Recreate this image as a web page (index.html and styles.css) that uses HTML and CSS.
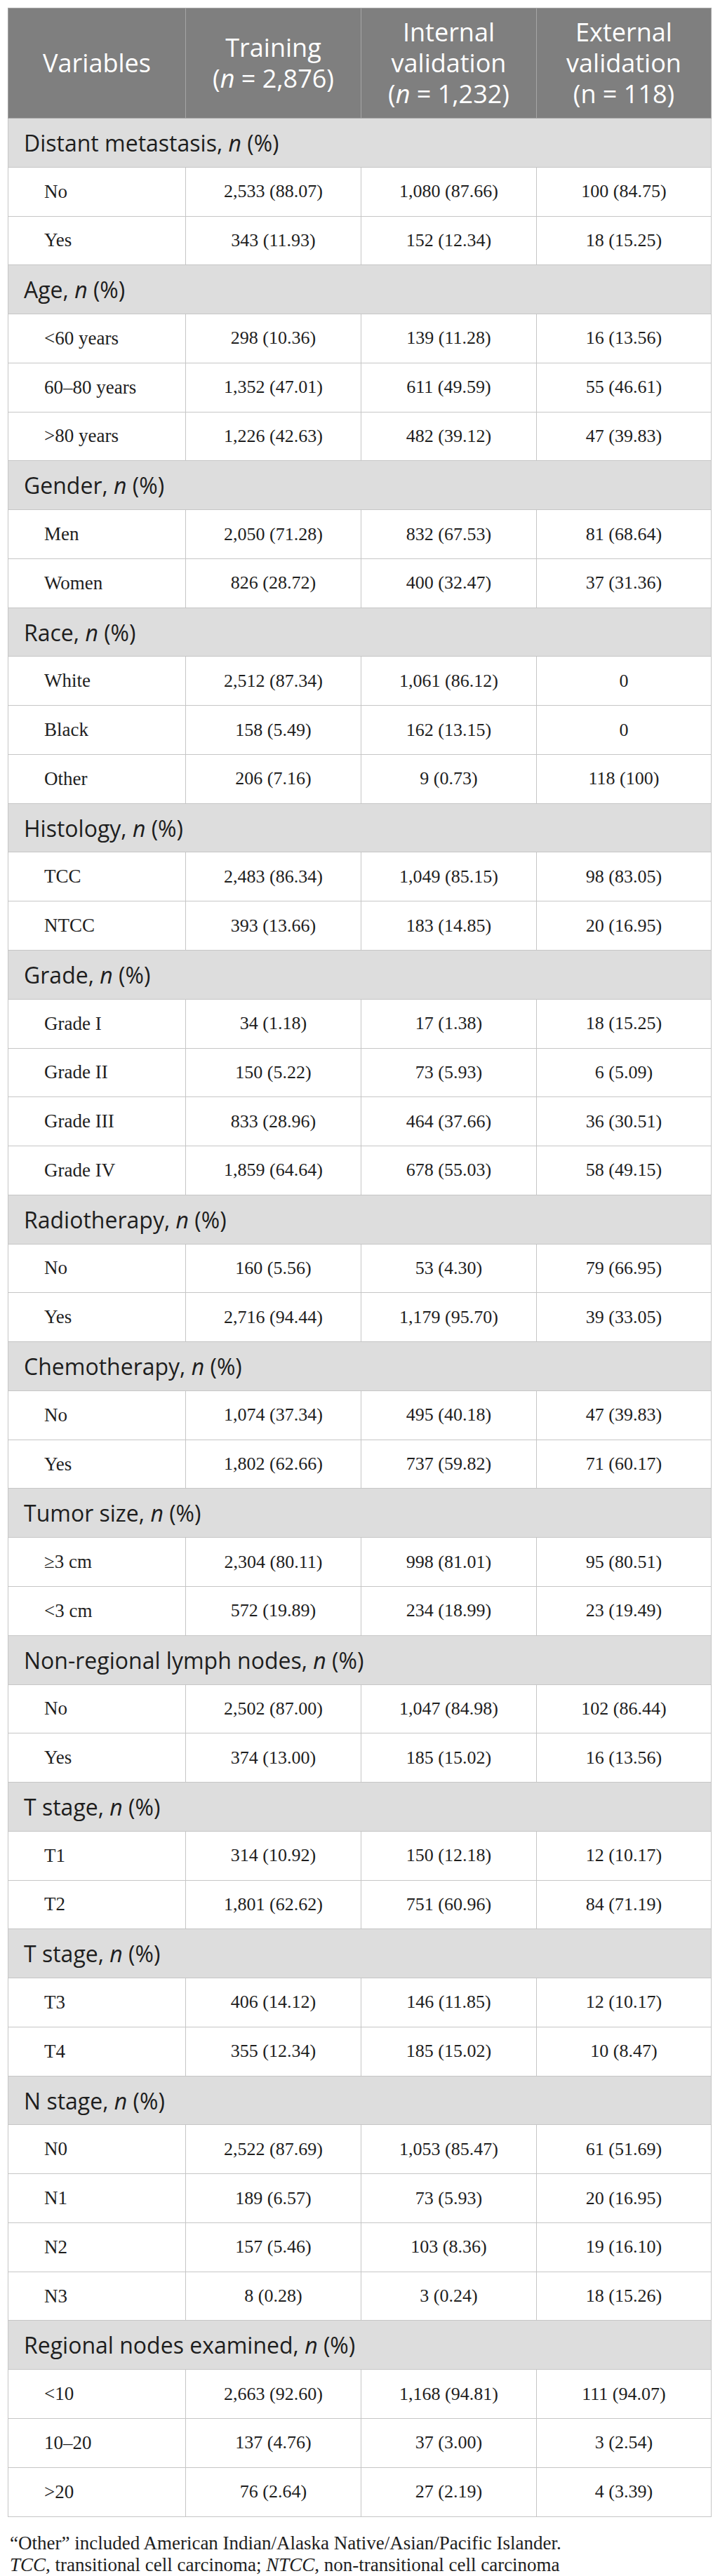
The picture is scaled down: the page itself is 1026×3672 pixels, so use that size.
FILE: index.html
```html
<!DOCTYPE html>
<html lang="en">
<head>
<meta charset="utf-8">
<title>Table</title>
<link rel="stylesheet" href="styles.css">
</head>
<body>
<div class="page">
<table class="tbl">
<colgroup><col class="c1"><col class="c2"><col class="c3"><col class="c4"></colgroup>
<thead>
<tr><th>Variables</th><th>Training<br>(<i>n</i> = 2,876)</th><th>Internal<br>validation<br>(<i>n</i> = 1,232)</th><th>External<br>validation<br>(n = 118)</th></tr>
</thead>
<tbody>
<tr class="sec"><td colspan="4">Distant metastasis, <i>n</i> (%)</td></tr>
<tr><td class="lbl">No</td><td>2,533 (88.07)</td><td>1,080 (87.66)</td><td>100 (84.75)</td></tr>
<tr><td class="lbl">Yes</td><td>343 (11.93)</td><td>152 (12.34)</td><td>18 (15.25)</td></tr>
<tr class="sec"><td colspan="4">Age, <i>n</i> (%)</td></tr>
<tr><td class="lbl">&lt;60 years</td><td>298 (10.36)</td><td>139 (11.28)</td><td>16 (13.56)</td></tr>
<tr><td class="lbl">60–80 years</td><td>1,352 (47.01)</td><td>611 (49.59)</td><td>55 (46.61)</td></tr>
<tr><td class="lbl">&gt;80 years</td><td>1,226 (42.63)</td><td>482 (39.12)</td><td>47 (39.83)</td></tr>
<tr class="sec"><td colspan="4">Gender, <i>n</i> (%)</td></tr>
<tr><td class="lbl">Men</td><td>2,050 (71.28)</td><td>832 (67.53)</td><td>81 (68.64)</td></tr>
<tr><td class="lbl">Women</td><td>826 (28.72)</td><td>400 (32.47)</td><td>37 (31.36)</td></tr>
<tr class="sec"><td colspan="4">Race, <i>n</i> (%)</td></tr>
<tr><td class="lbl">White</td><td>2,512 (87.34)</td><td>1,061 (86.12)</td><td>0</td></tr>
<tr><td class="lbl">Black</td><td>158 (5.49)</td><td>162 (13.15)</td><td>0</td></tr>
<tr><td class="lbl">Other</td><td>206 (7.16)</td><td>9 (0.73)</td><td>118 (100)</td></tr>
<tr class="sec"><td colspan="4">Histology, <i>n</i> (%)</td></tr>
<tr><td class="lbl">TCC</td><td>2,483 (86.34)</td><td>1,049 (85.15)</td><td>98 (83.05)</td></tr>
<tr><td class="lbl">NTCC</td><td>393 (13.66)</td><td>183 (14.85)</td><td>20 (16.95)</td></tr>
<tr class="sec"><td colspan="4">Grade, <i>n</i> (%)</td></tr>
<tr><td class="lbl">Grade I</td><td>34 (1.18)</td><td>17 (1.38)</td><td>18 (15.25)</td></tr>
<tr><td class="lbl">Grade II</td><td>150 (5.22)</td><td>73 (5.93)</td><td>6 (5.09)</td></tr>
<tr><td class="lbl">Grade III</td><td>833 (28.96)</td><td>464 (37.66)</td><td>36 (30.51)</td></tr>
<tr><td class="lbl">Grade IV</td><td>1,859 (64.64)</td><td>678 (55.03)</td><td>58 (49.15)</td></tr>
<tr class="sec"><td colspan="4">Radiotherapy, <i>n</i> (%)</td></tr>
<tr><td class="lbl">No</td><td>160 (5.56)</td><td>53 (4.30)</td><td>79 (66.95)</td></tr>
<tr><td class="lbl">Yes</td><td>2,716 (94.44)</td><td>1,179 (95.70)</td><td>39 (33.05)</td></tr>
<tr class="sec"><td colspan="4">Chemotherapy, <i>n</i> (%)</td></tr>
<tr><td class="lbl">No</td><td>1,074 (37.34)</td><td>495 (40.18)</td><td>47 (39.83)</td></tr>
<tr><td class="lbl">Yes</td><td>1,802 (62.66)</td><td>737 (59.82)</td><td>71 (60.17)</td></tr>
<tr class="sec"><td colspan="4">Tumor size, <i>n</i> (%)</td></tr>
<tr><td class="lbl">≥3 cm</td><td>2,304 (80.11)</td><td>998 (81.01)</td><td>95 (80.51)</td></tr>
<tr><td class="lbl">&lt;3 cm</td><td>572 (19.89)</td><td>234 (18.99)</td><td>23 (19.49)</td></tr>
<tr class="sec"><td colspan="4">Non-regional lymph nodes, <i>n</i> (%)</td></tr>
<tr><td class="lbl">No</td><td>2,502 (87.00)</td><td>1,047 (84.98)</td><td>102 (86.44)</td></tr>
<tr><td class="lbl">Yes</td><td>374 (13.00)</td><td>185 (15.02)</td><td>16 (13.56)</td></tr>
<tr class="sec"><td colspan="4">T stage, <i>n</i> (%)</td></tr>
<tr><td class="lbl">T1</td><td>314 (10.92)</td><td>150 (12.18)</td><td>12 (10.17)</td></tr>
<tr><td class="lbl">T2</td><td>1,801 (62.62)</td><td>751 (60.96)</td><td>84 (71.19)</td></tr>
<tr class="sec"><td colspan="4">T stage, <i>n</i> (%)</td></tr>
<tr><td class="lbl">T3</td><td>406 (14.12)</td><td>146 (11.85)</td><td>12 (10.17)</td></tr>
<tr><td class="lbl">T4</td><td>355 (12.34)</td><td>185 (15.02)</td><td>10 (8.47)</td></tr>
<tr class="sec"><td colspan="4">N stage, <i>n</i> (%)</td></tr>
<tr><td class="lbl">N0</td><td>2,522 (87.69)</td><td>1,053 (85.47)</td><td>61 (51.69)</td></tr>
<tr><td class="lbl">N1</td><td>189 (6.57)</td><td>73 (5.93)</td><td>20 (16.95)</td></tr>
<tr><td class="lbl">N2</td><td>157 (5.46)</td><td>103 (8.36)</td><td>19 (16.10)</td></tr>
<tr><td class="lbl">N3</td><td>8 (0.28)</td><td>3 (0.24)</td><td>18 (15.26)</td></tr>
<tr class="sec"><td colspan="4">Regional nodes examined, <i>n</i> (%)</td></tr>
<tr><td class="lbl">&lt;10</td><td>2,663 (92.60)</td><td>1,168 (94.81)</td><td>111 (94.07)</td></tr>
<tr><td class="lbl">10–20</td><td>137 (4.76)</td><td>37 (3.00)</td><td>3 (2.54)</td></tr>
<tr><td class="lbl">&gt;20</td><td>76 (2.64)</td><td>27 (2.19)</td><td>4 (3.39)</td></tr>
</tbody>
</table>
<div class="notes">
<p>“Other” included American Indian/Alaska Native/Asian/Pacific Islander.</p>
<p><i>TCC</i>, transitional cell carcinoma; <i>NTCC</i>, non-transitional cell carcinoma</p>
</div>
</div>
</body>
</html>
```
FILE: styles.css
```css
html, body {
  margin: 0;
  padding: 0;
  background: #ffffff;
}
.page {
  padding: 11px 0 0 11px;
}
.tbl {
  width: 1002px;
  border-collapse: collapse;
  table-layout: fixed;
}
.c1 { width: 253px; }
.c2 { width: 250px; }
.c3 { width: 250px; }
.c4 { width: 249px; }
.tbl th {
  background: #7f7f7f;
  color: #ffffff;
  font-family: "Open Sans", "Noto Sans", sans-serif;
  font-weight: 400;
  font-size: 36px;
  line-height: 44px;
  height: 156px;
  padding: 0;
  text-align: center;
  vertical-align: middle;
  border: 1px solid #a6a6a6;
}
.tbl td {
  border: 1px solid #c6c6c6;
  padding: 0;
  font-family: "Liberation Serif", serif;
  font-size: 26px;
  color: #1e1e1e;
  text-align: center;
  vertical-align: middle;
}
.tbl tbody tr {
  height: 69.78px;
}
.tbl td.lbl {
  text-align: left;
  padding-left: 51px;
  font-size: 27px;
}
.tbl tr.sec td {
  background: #dddddd;
  font-family: "Open Sans", "Noto Sans", sans-serif;
  font-size: 32px;
  text-align: left;
  padding-left: 22px;
  color: #1e1e1e;
}
.notes {
  margin-top: 22px;
  padding-left: 3px;
  font-family: "Liberation Serif", serif;
  font-size: 27px;
  line-height: 31px;
  color: #1e1e1e;
}
.notes p {
  margin: 0;
}
```
